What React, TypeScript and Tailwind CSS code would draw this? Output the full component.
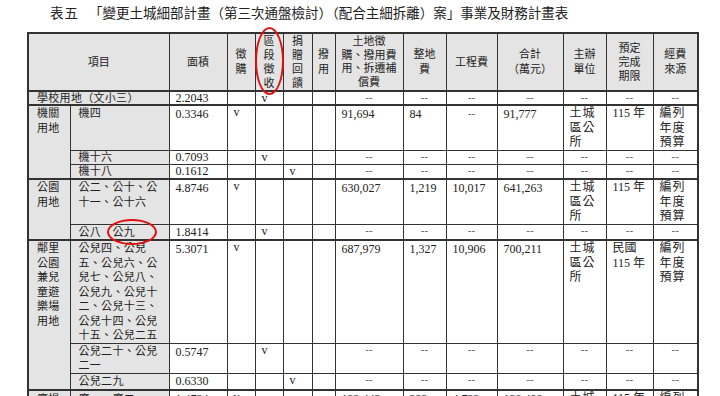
import React from 'react';

const font = 'font-["Liberation_Serif","Noto_Sans_CJK_TC",serif]';

const cols = [42, 99, 58, 28, 28, 29, 23, 68, 43, 51, 66, 43, 47, 45];

const th = 'border border-[#333] bg-[#e4e4e4] p-0 text-center align-middle font-normal text-[11px] leading-[14px] text-[#222]';
const gray = 'border border-[#333] bg-[#e4e4e4] p-0 pl-[8px] align-top text-[11px] leading-[12px] tracking-[0.3px] text-[#222]';
const cell = 'border border-[#333] bg-white p-0 pl-[6px] align-top text-[12px] leading-[12px] text-[#222]';
const dash = 'border border-[#333] bg-white p-0 text-center align-top text-[11px] leading-[11px] text-[#555]';

function Lines({ text, lh = 'leading-[14.5px]' }: { text: string; lh?: string }) {
  return (
    <div className={lh}>
      {text.split('\n').map((t, i) => (
        <div key={i}>{t}</div>
      ))}
    </div>
  );
}

function Checks({ at }: { at: number }) {
  // 徵購 / 區段徵收 / 捐贈回饋 / 撥用
  return (
    <>
      {[0, 1, 2, 3].map((i) => (
        <td key={i} className={cell}>
          {i === at ? 'v' : ''}
        </td>
      ))}
    </>
  );
}

function Dashes() {
  return (
    <>
      {Array.from({ length: 7 }).map((_, i) => (
        <td key={i} className={dash}>
          --
        </td>
      ))}
    </>
  );
}

function Costs({ land, site, work, total, term }: { land: string; site: string; work: string; total: string; term: string }) {
  return (
    <>
      <td className={`${cell} pt-[2px]`}>{land}</td>
      <td className={`${cell} pt-[2px]`}>{site}</td>
      <td className={work === '--' ? `${dash} pt-[2px]` : `${cell} pt-[2px]`}>{work}</td>
      <td className={`${cell} pt-[2px]`}>{total}</td>
      <td className={`${cell} text-[11px] tracking-[1px]`}>
        <Lines text={'土城\n區公\n所'} />
      </td>
      <td className={`${cell} text-[11px]`}>
        <Lines text={term} />
      </td>
      <td className={`${cell} text-[11px] tracking-[1px]`}>
        <Lines text={'編列\n年度\n預算'} />
      </td>
    </>
  );
}

export default function App() {
  return (
    <div className={`relative h-[396px] w-[720px] overflow-hidden bg-white ${font}`}>
      {/* Title */}
      <div className="flex h-[32px] items-center pl-[50px] pb-[3px] text-[13.5px] text-[#222]">
        <span className="tracking-[1px]">表五</span>
        <span className="ml-[10px]">「變更土城細部計畫（第三次通盤檢討）（配合主細拆離）案」事業及財務計畫表</span>
      </div>

      <table className="ml-[27px] w-[670px] table-fixed border-collapse border-2 border-[#333]">
        <colgroup>
          {cols.map((w, i) => (
            <col key={i} style={{ width: w }} />
          ))}
        </colgroup>
        <thead>
          <tr className="h-[58px]">
            <th colSpan={2} className={th}>項目</th>
            <th className={th}>面積</th>
            <th className={th}><Lines lh="leading-[15px]" text={'徵\n購'} /></th>
            <th className={th}><Lines lh="leading-[14px]" text={'區\n段\n徵\n收'} /></th>
            <th className={th}><Lines lh="leading-[14px]" text={'捐\n贈\n回\n饋'} /></th>
            <th className={th}><Lines lh="leading-[15px]" text={'撥\n用'} /></th>
            <th className={th}><Lines lh="leading-[13.5px]" text={'土地徵\n購、撥用費\n用、拆遷補\n償費'} /></th>
            <th className={th}><Lines lh="leading-[15px]" text={'整地\n費'} /></th>
            <th className={th}>工程費</th>
            <th className={th}><Lines lh="leading-[15px]" text={'合計\n（萬元）'} /></th>
            <th className={th}><Lines lh="leading-[15px]" text={'主辦\n單位'} /></th>
            <th className={th}><Lines lh="leading-[14px]" text={'預定\n完成\n期限'} /></th>
            <th className={th}><Lines lh="leading-[15px]" text={'經費\n來源'} /></th>
          </tr>
        </thead>
        <tbody>
          <tr className="h-[13px] border-t-2 border-[#333]">
            <td colSpan={2} className={gray}>學校用地（文小三）</td>
            <td className={cell}>2.2043</td>
            <Checks at={1} />
            <Dashes />
          </tr>

          <tr className="h-[44px] border-t-2 border-[#333]">
            <td rowSpan={3} className={gray}><Lines text={'機關\n用地'} /></td>
            <td className={`${gray} pt-[1px]`}>機四</td>
            <td className={`${cell} pt-[2px]`}>0.3346</td>
            <Checks at={0} />
            <Costs land="91,694" site="84" work="--" total="91,777" term="115 年" />
          </tr>
          <tr className="h-[14px]">
            <td className={gray}>機十六</td>
            <td className={cell}>0.7093</td>
            <Checks at={1} />
            <Dashes />
          </tr>
          <tr className="h-[15px]">
            <td className={gray}>機十八</td>
            <td className={cell}>0.1612</td>
            <Checks at={2} />
            <Dashes />
          </tr>

          <tr className="h-[44px] border-t-2 border-[#333]">
            <td rowSpan={2} className={gray}><Lines text={'公園\n用地'} /></td>
            <td className={gray}><Lines text={'公二、公十、公\n十一、公十六'} /></td>
            <td className={`${cell} pt-[2px]`}>4.8746</td>
            <Checks at={0} />
            <Costs land="630,027" site="1,219" work="10,017" total="641,263" term="115 年" />
          </tr>
          <tr className="h-[16px]">
            <td className={`${gray} pt-[1px]`}>公八　公九</td>
            <td className={`${cell} pt-[1px]`}>1.8414</td>
            <Checks at={1} />
            <Dashes />
          </tr>

          <tr className="h-[103px] border-t-2 border-[#333]">
            <td rowSpan={3} className={gray}><Lines text={'鄰里\n公園\n兼兒\n童遊\n樂場\n用地'} /></td>
            <td className={gray}>
              <Lines text={'公兒四、公兒\n五、公兒六、公\n兒七、公兒八、\n公兒九、公兒十\n二、公兒十三、\n公兒十四、公兒\n十五、公兒二五'} />
            </td>
            <td className={`${cell} pt-[2px]`}>5.3071</td>
            <Checks at={0} />
            <Costs land="687,979" site="1,327" work="10,906" total="700,211" term={'民國\n115 年'} />
          </tr>
          <tr className="h-[30px]">
            <td className={gray}><Lines text={'公兒二十、公兒\n二一'} /></td>
            <td className={`${cell} pt-[2px]`}>0.5747</td>
            <Checks at={1} />
            <Dashes />
          </tr>
          <tr className="h-[17px]">
            <td className={`${gray} pt-[1px]`}>公兒二九</td>
            <td className={`${cell} pt-[1px]`}>0.6330</td>
            <Checks at={2} />
            <Dashes />
          </tr>

          <tr className="h-[30px] border-t-2 border-[#333]">
            <td className={`${gray} pt-[2px]`}>廣場</td>
            <td className={`${gray} pt-[2px]`}>廣一、廣二</td>
            <td className={`${cell} pt-[2px]`}>1.4724</td>
            <Checks at={0} />
            <Costs land="133,443" site="323" work="4,733" total="138,499" term="115 年" />
          </tr>
        </tbody>
      </table>

      {/* red annotation circles */}
      <div className="pointer-events-none absolute left-[255px] top-[27px] h-[68px] w-[29px] rounded-[50%] border-2 border-[#e01010]" />
      <div className="pointer-events-none absolute left-[107px] top-[219px] h-[26px] w-[50px] rounded-[50%] border-2 border-[#e01010]" />
    </div>
  );
}
